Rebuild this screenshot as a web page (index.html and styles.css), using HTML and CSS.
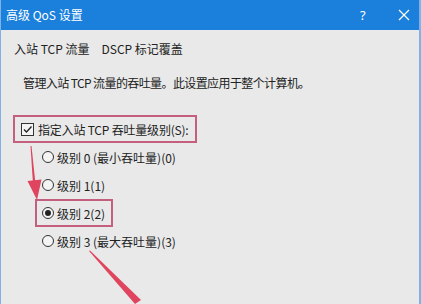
FILE: index.html
```html
<!DOCTYPE html>
<html lang="zh-CN">
<head>
<meta charset="utf-8">
<link rel="stylesheet" href="styles.css">
</head>
<body>
<div class="window">
  <div class="titlebar">
    <span class="title">高级 QoS 设置</span>
    <span class="help">?</span>
    <svg class="close" width="12" height="12" viewBox="0 0 12 12"><path d="M1 1 L11 11 M11 1 L1 11" stroke="#fff" stroke-width="1.2" fill="none"/></svg>
  </div>
  <div class="content">
    <div class="tabs">
      <span class="tab">入站 TCP 流量</span>
      <span class="tab">DSCP 标记覆盖</span>
    </div>
    <p class="desc">管理入站 TCP 流量的吞吐量。此设置应用于整个计算机。</p>
    <div class="group hl">
      <span class="checkbox"><svg width="11" height="11" viewBox="0 0 11 11"><path d="M2 5.5 L4.5 8 L9.5 2.5" stroke="#222" stroke-width="1.3" fill="none"/></svg></span>
      <span class="label">指定入站 TCP 吞吐量级别(S):</span>
    </div>
    <div class="radios">
      <div class="radio-row"><span class="radio"></span><span class="label">级别 0 (最小吞吐量)(0)</span></div>
      <div class="radio-row"><span class="radio"></span><span class="label">级别 1(1)</span></div>
      <div class="radio-row hl"><span class="radio checked"></span><span class="label">级别 2(2)</span></div>
      <div class="radio-row"><span class="radio"></span><span class="label">级别 3 (最大吞吐量)(3)</span></div>
    </div>
  </div>
  <svg class="arrows" width="421" height="304" viewBox="0 0 421 304">
    <polygon points="30.5,146 31.5,146 35.5,184 33,184" fill="#e0455f"/>
    <polygon points="27.5,181 41.5,179.5 37,200" fill="#e0455f"/>
    <polygon points="89,251 90,250.5 141,300 135,304" fill="#e0455f"/>
  </svg>
</div>
</body>
</html>
```
FILE: styles.css
```css
* { box-sizing: border-box; }
html, body { margin: 0; padding: 0; }
body {
  font-family: "Noto Sans CJK SC", "Noto Sans", sans-serif;
  font-size: 12px;
  color: #222;
  background: #e9e9e9;
}
.window {
  position: relative;
  width: 421px;
  height: 304px;
  background: #e9e9e9;
  border-left: 1px solid #7fb2e6;
  border-right: 2px solid #7fb2e6;
  overflow: hidden;
}
.titlebar {
  height: 30px;
  background: #1b80db;
  color: #fff;
  display: flex;
  align-items: center;
  padding-left: 6px;
  margin-left: -1px;
  margin-right: -2px;
}
.title { flex: 1; font-size: 12px; line-height: 30px; }
.help { width: 14px; margin-right: 24px; font-size: 13px; font-family: "Noto Sans", sans-serif; }
.close { margin-right: 11px; }
.tabs {
  height: 36px;
  display: flex;
  align-items: center;
  gap: 12px;
  padding-left: 13px;
}
.desc {
  margin: 8px 0 0 22px;
  line-height: 18px;
  letter-spacing: -0.6px;
}
.group {
  margin: 23px 0 0 12px;
  height: 28px;
  width: fit-content;
  display: flex;
  align-items: center;
  padding: 0 6px 0 6px;
  border: 2px solid transparent;
  letter-spacing: -0.2px;
}
.hl { border-color: #c4607e !important; }
.checkbox {
  width: 13px;
  height: 13px;
  border: 1px solid #333;
  background: #f4f4f4;
  display: flex;
  align-items: center;
  justify-content: center;
  margin-right: 4px;
}
.radios { margin-left: 34px; }
.radio-row {
  height: 28px;
  width: fit-content;
  display: flex;
  align-items: center;
  border: 2px solid transparent;
  padding: 0 6px 0 5px;
}
.radio {
  width: 12px;
  height: 12px;
  border-radius: 50%;
  border: 1px solid #333;
  background: #f4f4f4;
  margin-right: 3px;
  display: flex;
  align-items: center;
  justify-content: center;
}
.radio.checked::after {
  content: "";
  width: 6px;
  height: 6px;
  border-radius: 50%;
  background: #222;
}
.arrows { position: absolute; left: -1px; top: 0; pointer-events: none; }
```
